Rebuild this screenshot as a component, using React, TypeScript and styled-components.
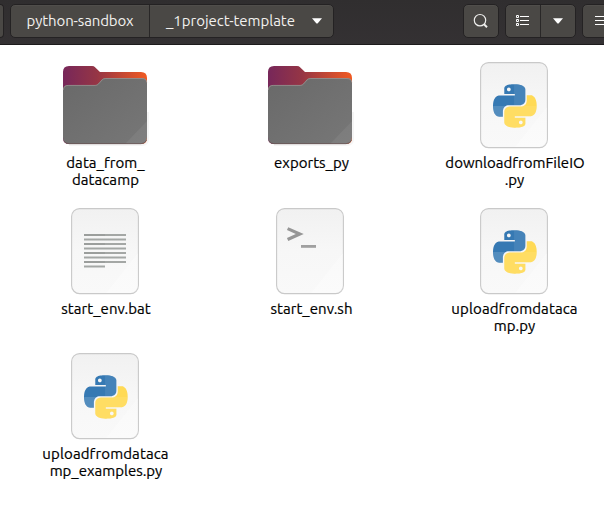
import React from 'react';
import styled, { createGlobalStyle } from 'styled-components';

const GlobalStyle = createGlobalStyle`
  * { box-sizing: border-box; }
  body {
    margin: 0;
    background: #ffffff;
    overflow: hidden;
    font-family: Ubuntu, "Noto Sans", "Open Sans", sans-serif;
    font-size: 15px;
  }
`;

const Window = styled.div`
  width: 604px;
  height: 507px;
  overflow: hidden;
`;

const HeaderBar = styled.header`
  display: flex;
  height: 45px;
  padding-top: 4px;
  align-items: flex-start;
  background: linear-gradient(#302e2f, #343133);
  border-bottom: 1px solid #1d1b1c;
  overflow: hidden;
`;

const ButtonGroup = styled.div<{ $gap?: number; $edge?: boolean }>`
  display: flex;
  flex: none;
  height: 34px;
  margin-left: ${(p) => p.$gap ?? 0}px;
  border: 1px solid #242223;
  border-left-width: ${(p) => (p.$edge ? 0 : 1)}px;
  border-radius: ${(p) => (p.$edge ? '0 5px 5px 0' : '5px')};
  background: #4a4845;
  overflow: hidden;
  box-shadow: inset 0 1px #504e4b;
`;

const Button = styled.button<{ $width: number; $shift?: number }>`
  display: flex;
  align-items: center;
  justify-content: center;
  width: ${(p) => p.$width}px;
  height: 32px;
  padding: 0 0 0 ${(p) => p.$shift ?? 0}px;
  border: 0;
  background: transparent;
  color: #f2f1ef;
  font: inherit;
  & + & { border-left: 1px solid #292727; }
`;

const Crumb = styled.span<{ $tracking: number }>`
  letter-spacing: ${(p) => p.$tracking}px;
  line-height: 20px;
  white-space: nowrap;
`;

const ArrowSlot = styled.span`
  display: flex;
  margin-left: 17px;
`;

const FileGrid = styled.main`
  display: grid;
  grid-template-columns: 205px 205px 203px;
  grid-template-rows: 146px 145px 146px;
  padding: 12px 0 0 2.5px;
`;

const FileItem = styled.div`
  display: flex;
  flex-direction: column;
  align-items: center;
  svg { flex: none; display: block; }
`;

const Label = styled.div`
  margin-top: 1px;
  color: #000000;
  text-align: center;
  line-height: 17px;
  -webkit-text-stroke: 0.2px #000000;
`;

const Line = styled.div<{ $tracking: number; $shift?: number }>`
  letter-spacing: ${(p) => p.$tracking}px;
  padding-left: ${(p) => p.$shift ?? 1}px;
  white-space: nowrap;
`;

const Arrow = () => (
  <svg width="10" height="6" viewBox="0 0 10 6"><path d="M0 .3h10L6 5Q5 6 4 5z" fill="#fff" /></svg>
);

const SearchIcon = () => (
  <svg width="16" height="16" viewBox="0 0 16 16" fill="none" stroke="#eeeeec">
    <circle cx="7" cy="7.2" r="5.7" strokeWidth="1.2" />
    <path d="m11 11.2 3 3" strokeWidth="2" />
  </svg>
);

const ListIcon = () => (
  <svg width="14" height="12" viewBox="0 0 14 12" fill="none" stroke="#fff">
    <path d="M.5.5h2v2h-2zM.5 4.5h2v2h-2zM.5 8.5h2v2h-2zM4 1.5h9M4 5.5h9M4 9.5h9" />
  </svg>
);

const MenuIcon = () => (
  <svg width="14" height="10" viewBox="0 0 14 10" stroke="#fff"><path d="M0 .5h14M0 4.5h14M0 8.5h14" /></svg>
);

const FolderIcon = () => (
  <svg width="96" height="96" viewBox="0 0 96 96">
    <defs>
      <linearGradient id="folderBack" x1="6" y1="20" x2="90" y2="20" gradientUnits="userSpaceOnUse">
        <stop offset="0" stopColor="#77275a" />
        <stop offset=".4" stopColor="#953545" />
        <stop offset="1" stopColor="#f15a22" />
      </linearGradient>
      <linearGradient id="folderFront" x1="0" y1="0" x2="1" y2="1">
        <stop offset="0" stopColor="#696969" />
        <stop offset="1" stopColor="#777777" />
      </linearGradient>
    </defs>
    <path d="M12 88h73q6 0 6-6V55" fill="none" stroke="#000" strokeOpacity=".04" strokeWidth="2" />
    <path d="M6 15q0-6 6-6h23q2 0 3.3 1.4L43 15H84q6 0 6 6v60q0 6-6 6H12q-6 0-6-6z" fill="url(#folderBack)" />
    <path d="M6 33q0-5 5-5h27q2 0 3.3-1.6l3.4-3.8Q46 21 48 21h37q5 0 5 5v54q0 7-6 7H12q-6 0-6-7z" fill="url(#folderFront)" />
    <path d="M6.3 33q.2-4.6 5-4.6h27q2 0 3.3-1.5l3.4-3.9q1.3-1.5 3.3-1.5H85q4.5 0 4.8 4" fill="none" stroke="#b4a6a4" strokeOpacity=".65" strokeWidth=".8" />
    <path d="M68 87 90 64v16q0 7-6 7z" fill="#fff" fillOpacity=".06" />
    <path d="M7 84q2 2.7 5 2.7h72q4 0 5.5-3.5" fill="none" stroke="#674d4d" strokeWidth=".7" />
  </svg>
);

const Page = ({ children }: { children: React.ReactNode }) => (
  <svg width="96" height="96" viewBox="0 0 96 96">
    <defs>
      <linearGradient id="paper" x1="0" y1="0" x2="0" y2="1">
        <stop offset="0" stopColor="#f1f1f1" />
        <stop offset=".5" stopColor="#f7f7f7" />
        <stop offset="1" stopColor="#f9f9f9" />
      </linearGradient>
    </defs>
    <rect x="14.6" y="5.6" width="66.8" height="85" rx="8" fill="url(#paper)" stroke="#c9c9c9" strokeWidth="1.1" />
    <path d="M81 50v33q0 7-7 7H49z" fill="#fff" fillOpacity=".3" />
    {children}
  </svg>
);

const SNAKE =
  'M14.25.18l.9.2.73.26.59.3.45.32.34.34.25.34.16.33.1.3.04.26.02.2-.01.13V8.5l-.05.63-.13.55-.21.46-.26.38-.3.31-.33.25-.35.19-.35.14-.33.1-.3.07-.26.04-.21.02H8.77l-.69.05-.59.14-.5.22-.41.27-.33.32-.27.35-.2.36-.15.37-.1.35-.07.32-.04.27-.02.21v3.06H3.17l-.21-.03-.28-.07-.32-.12-.35-.18-.36-.26-.36-.36-.35-.46-.32-.59-.28-.73-.21-.88-.14-1.05-.05-1.23.06-1.22.16-1.04.24-.87.32-.71.36-.57.4-.44.42-.33.42-.24.4-.16.36-.1.32-.05.24-.01h.16l.06.01h8.16v-.83H6.18l-.01-2.75-.02-.37.05-.34.11-.31.17-.28.25-.26.31-.23.38-.2.44-.18.51-.15.58-.12.64-.1.71-.06.77-.04.84-.02 1.27.05zm-6.3 1.98l-.23.33-.08.41.08.41.23.34.33.22.41.09.41-.09.33-.22.23-.34.08-.41-.08-.41-.23-.33-.33-.22-.41-.09-.41.09z';

const PythonIcon = () => (
  <Page>
    <defs>
      <clipPath id="snakes">
        <path d={SNAKE} />
        <path d={SNAKE} transform="rotate(180 12 12)" />
      </clipPath>
    </defs>
    <g transform="translate(27.1 27.2) scale(1.81)">
      <path d={SNAKE} fill="#3679b3" />
      <path d={SNAKE} fill="#ffd748" transform="rotate(180 12 12)" />
      <g clipPath="url(#snakes)" fill="#fff">
        <path d="M11.6 0H24v12H11.6z" fillOpacity=".08" />
        <path d="M0 12h24v12H0z" fillOpacity=".15" />
      </g>
    </g>
  </Page>
);

const TextIcon = () => (
  <Page>
    <path d="M27 32h42M27 36.5h42M27 41h42M27 45.5h42M27 50h42M27 54.5h42M27 59h42M27 63.5h21" stroke="#a4a7a5" strokeWidth="1.8" />
    <path d="M27 32h21M27 41h21M27 50h21M27 59h21" stroke="#929593" strokeWidth="1" />
  </Page>
);

const ShellIcon = () => (
  <Page>
    <path d="m25.6 25.6 12.2 5.4-12.2 5.5" fill="none" stroke="#969696" strokeWidth="3.2" />
    <path d="M39 43.4h15" stroke="#a0a0a0" strokeWidth="2.8" />
  </Page>
);

type LabelLine = [text: string, tracking: number, shift?: number];

const files: { icon: React.ComponentType; lines: LabelLine[] }[] = [
  { icon: FolderIcon, lines: [['data_from_', 0.05], ['datacamp', 0.1]] },
  { icon: FolderIcon, lines: [['exports_py', 0, 3]] },
  { icon: PythonIcon, lines: [['downloadfromFileIO', 0, 2], ['.py', 0, 1]] },
  { icon: TextIcon, lines: [['start_env.bat', 0.05, 2]] },
  { icon: ShellIcon, lines: [['start_env.sh', 0.05, 3]] },
  { icon: PythonIcon, lines: [['uploadfromdataca', 0.12], ['mp.py', 0.05]] },
  { icon: PythonIcon, lines: [['uploadfromdataca', 0.12], ['mp_examples.py', 0, 2]] },
];

export default function App() {
  return (
    <Window>
      <GlobalStyle />
      <HeaderBar>
        <ButtonGroup $edge><Button $width={3} aria-label="Parent folders" /></ButtonGroup>
        <ButtonGroup $gap={6}>
          <Button $width={138}><Crumb $tracking={-0.13}>python-sandbox</Crumb></Button>
          <Button $width={184} $shift={5}>
            <Crumb $tracking={-0.03}>_1project-template</Crumb>
            <ArrowSlot><Arrow /></ArrowSlot>
          </Button>
        </ButtonGroup>
        <ButtonGroup $gap={129}><Button $width={34} aria-label="Search"><SearchIcon /></Button></ButtonGroup>
        <ButtonGroup $gap={6}>
          <Button $width={34} aria-label="List view"><ListIcon /></Button>
          <Button $width={35} aria-label="View options"><Arrow /></Button>
        </ButtonGroup>
        <ButtonGroup $gap={6}><Button $width={38} aria-label="Menu"><MenuIcon /></Button></ButtonGroup>
      </HeaderBar>
      <FileGrid>
        {files.map(({ icon: Icon, lines }, i) => (
          <FileItem key={i}>
            <Icon />
            <Label>
              {lines.map(([text, tracking, shift]) => (
                <Line key={text} $tracking={tracking} $shift={shift}>{text}</Line>
              ))}
            </Label>
          </FileItem>
        ))}
      </FileGrid>
    </Window>
  );
}
